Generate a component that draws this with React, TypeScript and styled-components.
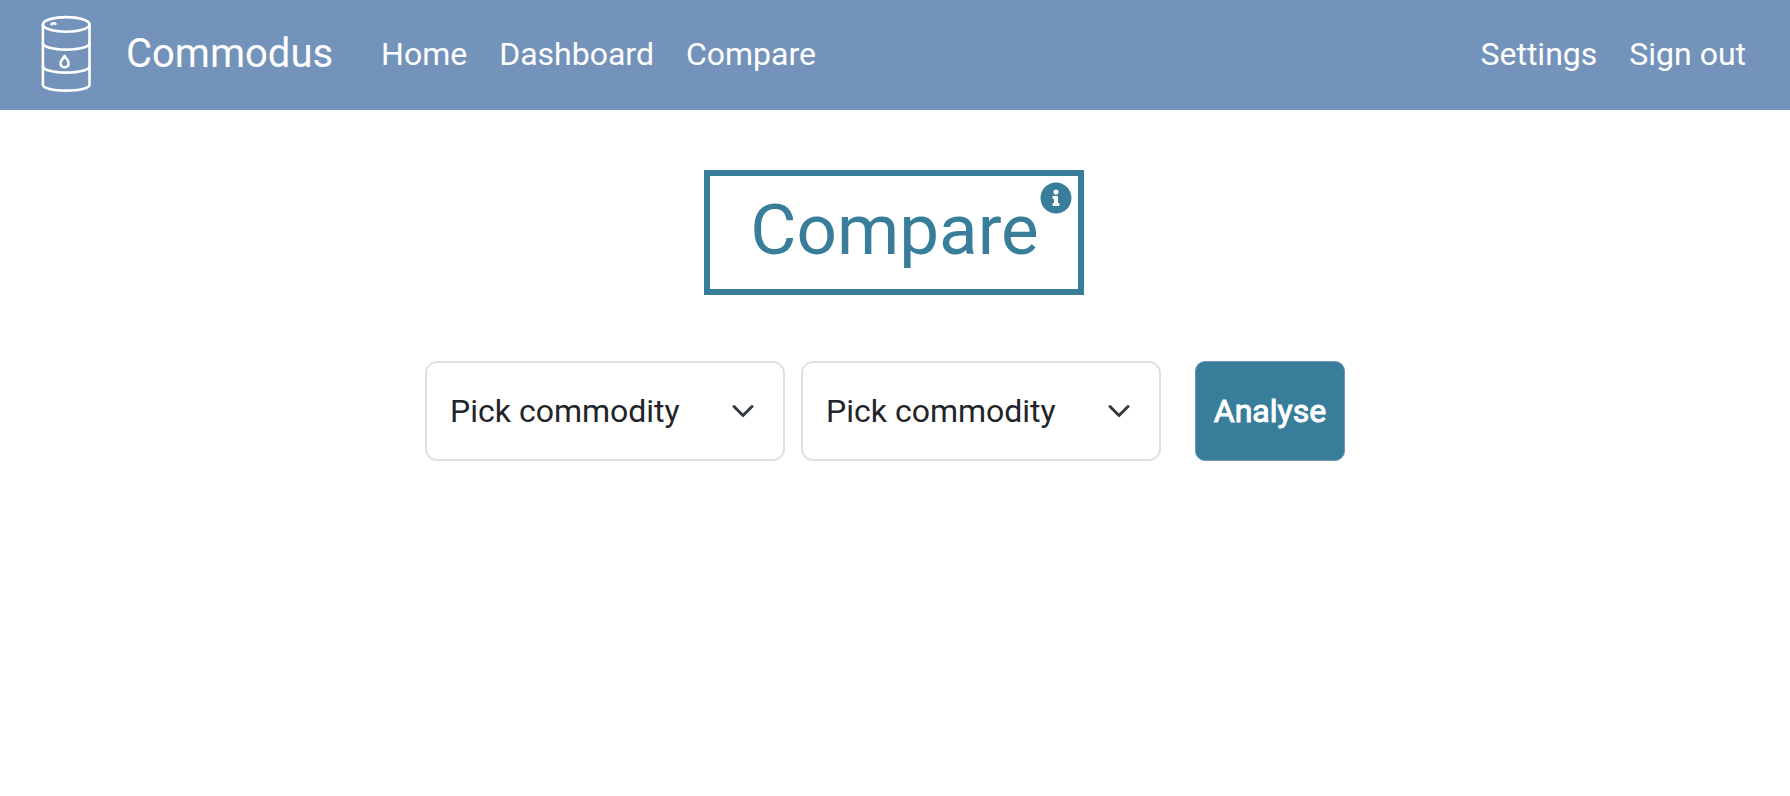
import React from "react";
import styled, { createGlobalStyle } from "styled-components";
import { FaInfoCircle } from "react-icons/fa";

const color = {
  nav: "#7493bb",
  accent: "#387d9a",
  ink: "#212529",
  line: "#dee2e6",
};

const GlobalStyle = createGlobalStyle`
  *, *::before, *::after { box-sizing: border-box; }
  body {
    margin: 0;
    background: #fff;
    color: ${color.ink};
    font-family: Roboto, "Liberation Sans", sans-serif;
    font-size: 32px;
    line-height: 48px;
  }
`;

const NavBar = styled.nav`
  display: flex;
  align-items: center;
  min-height: 110px;
  padding: 0 28px 2px 40px;
  background: ${color.nav};
`;

const Brand = styled.a`
  display: flex;
  align-items: center;
  gap: 34px;
  margin-right: 32px;
  color: #fff;
  font-size: 40px;
  text-decoration: none;
`;

const Logo = styled.svg`
  display: block;
  width: 52px;
  height: 80px;
  fill: none;
  stroke: #fff;
  stroke-width: 2.6;
  stroke-linecap: round;
  stroke-linejoin: round;
`;

const NavList = styled.ul<{ $end?: boolean }>`
  display: flex;
  margin: 0 0 0 ${(p) => (p.$end ? "auto" : "0")};
  padding: 0;
  list-style: none;
`;

const NavLink = styled.a`
  display: block;
  padding: 0 16px;
  color: #fff;
  text-decoration: none;
`;

const Main = styled.main`
  display: flex;
  flex-direction: column;
  align-items: center;
  gap: 66px;
  padding: 60px 24px 60px 22px;
`;

const TitleBox = styled.header`
  display: flex;
  align-items: flex-start;
  gap: 1px;
  padding: 6px 6px 4px 40px;
  border: 6px solid ${color.accent};
  color: ${color.accent};
`;

const Title = styled.h1`
  margin: 0;
  padding: 6px 0 13px;
  font-size: 71px;
  font-weight: 400;
  line-height: 84px;
`;

const InfoButton = styled.button`
  display: flex;
  padding: 0;
  border: 0;
  background: none;
  color: inherit;
  font-size: 32px;
  cursor: pointer;
`;

const CompareForm = styled.form`
  display: flex;
  flex-wrap: wrap;
  justify-content: center;
  gap: 16px;
  padding-right: 18px;
`;

const Picker = styled.div`
  display: grid;
  align-items: center;
  width: 360px;

  > * { grid-area: 1 / 1; }
`;

const PickerSelect = styled.select`
  width: 100%;
  height: 100px;
  padding: 0 72px 0 23px;
  border: 2px solid ${color.line};
  border-radius: 12px;
  background: #fff;
  color: ${color.ink};
  font: inherit;
  appearance: none;
`;

const Chevron = styled.svg`
  justify-self: end;
  width: 24px;
  height: 24px;
  margin-right: 30px;
  fill: none;
  stroke: #343a40;
  stroke-width: 2;
  stroke-linecap: round;
  stroke-linejoin: round;
  pointer-events: none;
`;

const AnalyseButton = styled.button`
  width: 150px;
  height: 100px;
  margin-left: 18px;
  padding: 0;
  border: 1px solid ${color.nav};
  border-radius: 10px;
  background: ${color.accent};
  color: #fff;
  font: inherit;
  -webkit-text-stroke: 1px #fff;
  cursor: pointer;
`;

function BarrelLogo() {
  return (
    <Logo viewBox="40 14 52 80" aria-hidden="true">
      <ellipse cx="66.2" cy="24.4" rx="23.3" ry="7.3" />
      <path d="M42.9 24.4V85c0 3.2 10.3 5.6 23.3 5.6S89.500 88.200 89.500 85V24.400" />
      <path d="M42.9 43.2c0 3.600 10.300 6.400 23.300 6.400s23.300-2.800 23.300-6.400" />
      <path d="M42.9 66.200c0 3.600 10.300 6.400 23.300 6.400s23.300-2.800 23.300-6.400" />
      <path d="M64.600 55.800c-1.600 3-4 4.800-4 7.600a4 3.900 0 0 0 8 0c0-2.800-2.400-4.600-4-7.600z" />
      <path d="M51.600 24.100c.8-1 3-1.200 3.800-.3" />
    </Logo>
  );
}

function CommodityPicker({ label }: { label: string }) {
  return (
    <Picker>
      <PickerSelect aria-label={label} defaultValue="">
        <option value="">Pick commodity</option>
      </PickerSelect>
      <Chevron viewBox="0 0 16 16" aria-hidden="true">
        <path d="m2 5 6 6 6-6" />
      </Chevron>
    </Picker>
  );
}

export default function App() {
  return (
    <>
      <GlobalStyle />
      <NavBar>
        <Brand href="#">
          <BarrelLogo />
          Commodus
        </Brand>
        <NavList>
          <li><NavLink href="#">Home</NavLink></li>
          <li><NavLink href="#">Dashboard</NavLink></li>
          <li><NavLink href="#">Compare</NavLink></li>
        </NavList>
        <NavList $end>
          <li><NavLink href="#">Settings</NavLink></li>
          <li><NavLink href="#">Sign out</NavLink></li>
        </NavList>
      </NavBar>
      <Main>
        <TitleBox>
          <Title>Compare</Title>
          <InfoButton type="button" aria-label="About this page">
            <FaInfoCircle />
          </InfoButton>
        </TitleBox>
        <CompareForm>
          <CommodityPicker label="First commodity" />
          <CommodityPicker label="Second commodity" />
          <AnalyseButton type="button">Analyse</AnalyseButton>
        </CompareForm>
      </Main>
    </>
  );
}
